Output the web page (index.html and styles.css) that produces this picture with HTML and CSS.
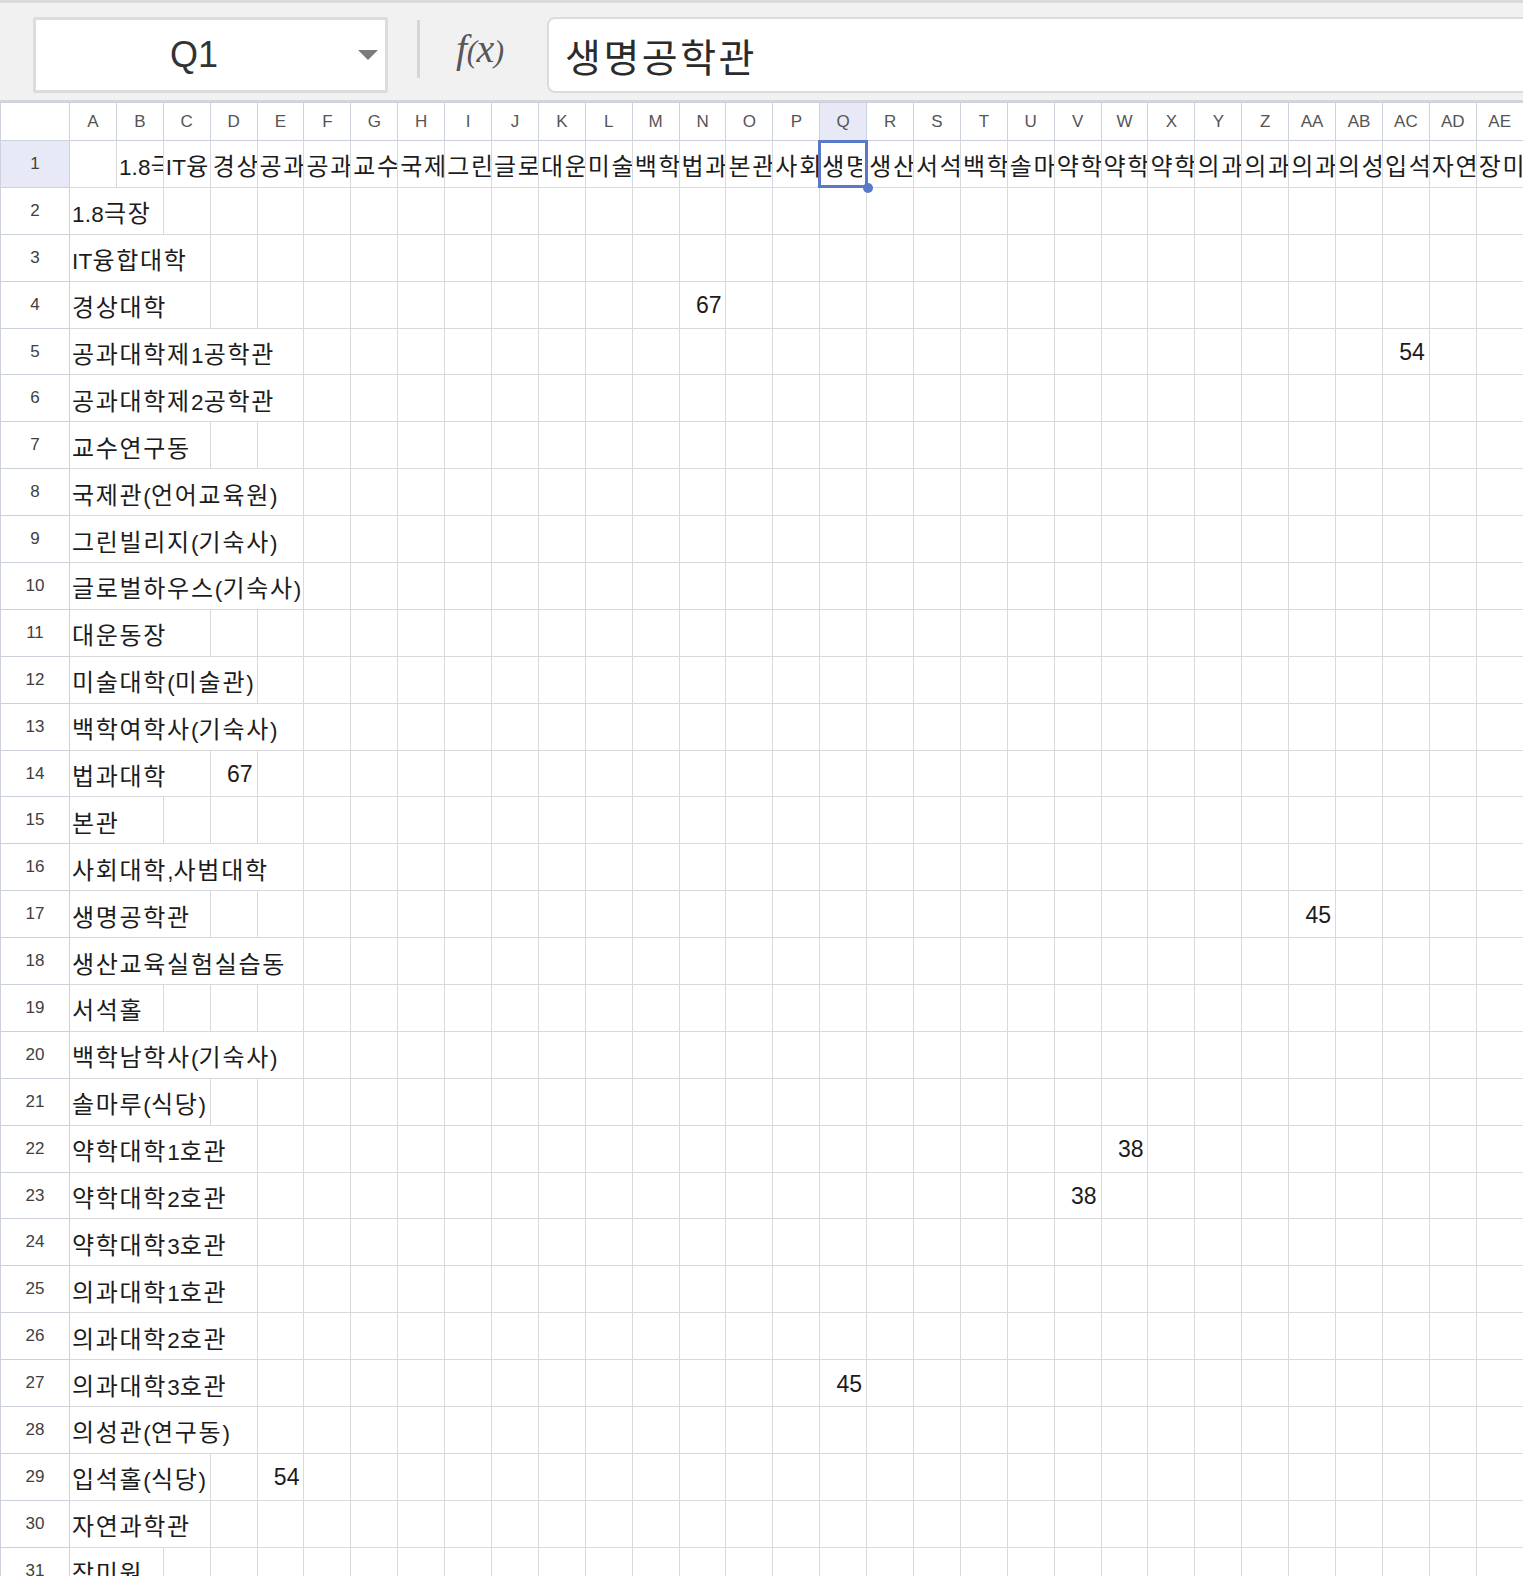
FILE: index.html
```html
<!DOCTYPE html>
<html lang="ko">
<head>
<meta charset="utf-8">
<title>Sheet</title>
<link rel="stylesheet" href="styles.css">
</head>
<body>
<div class="toolbar">
  <div class="namebox"><span class="cellref">Q1</span><span class="caret"></span></div>
  <div class="divider"></div>
  <div class="fx">f<span class="paren">(</span>x<span class="paren">)</span></div>
  <div class="formula">생명공학관</div>
</div>
<table class="sheet">
<colgroup><col class="rh"><col span="31" class="cw"></colgroup>
<thead>
<tr><th class="corner"></th><th>A</th><th>B</th><th>C</th><th>D</th><th>E</th><th>F</th><th>G</th><th>H</th><th>I</th><th>J</th><th>K</th><th>L</th><th>M</th><th>N</th><th>O</th><th>P</th><th class="hl">Q</th><th>R</th><th>S</th><th>T</th><th>U</th><th>V</th><th>W</th><th>X</th><th>Y</th><th>Z</th><th>AA</th><th>AB</th><th>AC</th><th>AD</th><th>AE</th></tr>
</thead>
<tbody>
<tr><th class="hl">1</th><td></td><td><span class="lt">1.8</span>극장</td><td><span class="lt">IT</span>융합대학</td><td>경상대학</td><td>공과대학제<span class="lt">1</span>공학관</td><td>공과대학제<span class="lt">2</span>공학관</td><td>교수연구동</td><td>국제관<span class="lt">(</span>언어교육원<span class="lt">)</span></td><td>그린빌리지<span class="lt">(</span>기숙사<span class="lt">)</span></td><td>글로벌하우스<span class="lt">(</span>기숙사<span class="lt">)</span></td><td>대운동장</td><td>미술대학<span class="lt">(</span>미술관<span class="lt">)</span></td><td>백학여학사<span class="lt">(</span>기숙사<span class="lt">)</span></td><td>법과대학</td><td>본관</td><td>사회대학<span class="lt">,</span>사범대학</td><td class="sel"><div class="clip">생명공학관</div></td><td>생산교육실험실습동</td><td>서석홀</td><td>백학남학사<span class="lt">(</span>기숙사<span class="lt">)</span></td><td>솔마루<span class="lt">(</span>식당<span class="lt">)</span></td><td>약학대학<span class="lt">1</span>호관</td><td>약학대학<span class="lt">2</span>호관</td><td>약학대학<span class="lt">3</span>호관</td><td>의과대학<span class="lt">1</span>호관</td><td>의과대학<span class="lt">2</span>호관</td><td>의과대학<span class="lt">3</span>호관</td><td>의성관<span class="lt">(</span>연구동<span class="lt">)</span></td><td>입석홀<span class="lt">(</span>식당<span class="lt">)</span></td><td>자연과학관</td><td>장미원</td></tr>
<tr><th>2</th><td colspan="2"><span class="lt">1.8</span>극장</td>
<td></td><td></td><td></td><td></td><td></td><td></td><td></td><td></td><td></td><td></td>
<td></td><td></td><td></td><td></td><td></td><td></td><td></td><td></td><td></td><td></td>
<td></td><td></td><td></td><td></td><td></td><td></td><td></td><td></td><td></td></tr>
<tr><th>3</th><td colspan="3"><span class="lt">IT</span>융합대학</td>
<td></td><td></td><td></td><td></td><td></td><td></td><td></td><td></td><td></td><td></td>
<td></td><td></td><td></td><td></td><td></td><td></td><td></td><td></td><td></td><td></td>
<td></td><td></td><td></td><td></td><td></td><td></td><td></td><td></td></tr>
<tr><th>4</th><td colspan="3">경상대학</td>
<td></td><td></td><td></td><td></td><td></td><td></td><td></td><td></td><td></td><td></td>
<td class="n">67</td>
<td></td><td></td><td></td><td></td><td></td><td></td><td></td><td></td><td></td><td></td>
<td></td><td></td><td></td><td></td><td></td><td></td><td></td></tr>
<tr><th>5</th><td colspan="5">공과대학제<span class="lt">1</span>공학관</td>
<td></td><td></td><td></td><td></td><td></td><td></td><td></td><td></td><td></td><td></td>
<td></td><td></td><td></td><td></td><td></td><td></td><td></td><td></td><td></td><td></td>
<td></td><td></td><td></td>
<td class="n">54</td>
<td></td><td></td></tr>
<tr><th>6</th><td colspan="5">공과대학제<span class="lt">2</span>공학관</td>
<td></td><td></td><td></td><td></td><td></td><td></td><td></td><td></td><td></td><td></td>
<td></td><td></td><td></td><td></td><td></td><td></td><td></td><td></td><td></td><td></td>
<td></td><td></td><td></td><td></td><td></td><td></td></tr>
<tr><th>7</th><td colspan="3">교수연구동</td>
<td></td><td></td><td></td><td></td><td></td><td></td><td></td><td></td><td></td><td></td>
<td></td><td></td><td></td><td></td><td></td><td></td><td></td><td></td><td></td><td></td>
<td></td><td></td><td></td><td></td><td></td><td></td><td></td><td></td></tr>
<tr><th>8</th><td colspan="5">국제관<span class="lt">(</span>언어교육원<span class="lt">)</span></td>
<td></td><td></td><td></td><td></td><td></td><td></td><td></td><td></td><td></td><td></td>
<td></td><td></td><td></td><td></td><td></td><td></td><td></td><td></td><td></td><td></td>
<td></td><td></td><td></td><td></td><td></td><td></td></tr>
<tr><th>9</th><td colspan="5">그린빌리지<span class="lt">(</span>기숙사<span class="lt">)</span></td>
<td></td><td></td><td></td><td></td><td></td><td></td><td></td><td></td><td></td><td></td>
<td></td><td></td><td></td><td></td><td></td><td></td><td></td><td></td><td></td><td></td>
<td></td><td></td><td></td><td></td><td></td><td></td></tr>
<tr><th>10</th><td colspan="5">글로벌하우스<span class="lt">(</span>기숙사<span class="lt">)</span></td>
<td></td><td></td><td></td><td></td><td></td><td></td><td></td><td></td><td></td><td></td>
<td></td><td></td><td></td><td></td><td></td><td></td><td></td><td></td><td></td><td></td>
<td></td><td></td><td></td><td></td><td></td><td></td></tr>
<tr><th>11</th><td colspan="3">대운동장</td>
<td></td><td></td><td></td><td></td><td></td><td></td><td></td><td></td><td></td><td></td>
<td></td><td></td><td></td><td></td><td></td><td></td><td></td><td></td><td></td><td></td>
<td></td><td></td><td></td><td></td><td></td><td></td><td></td><td></td></tr>
<tr><th>12</th><td colspan="4">미술대학<span class="lt">(</span>미술관<span class="lt">)</span></td>
<td></td><td></td><td></td><td></td><td></td><td></td><td></td><td></td><td></td><td></td>
<td></td><td></td><td></td><td></td><td></td><td></td><td></td><td></td><td></td><td></td>
<td></td><td></td><td></td><td></td><td></td><td></td><td></td></tr>
<tr><th>13</th><td colspan="5">백학여학사<span class="lt">(</span>기숙사<span class="lt">)</span></td>
<td></td><td></td><td></td><td></td><td></td><td></td><td></td><td></td><td></td><td></td>
<td></td><td></td><td></td><td></td><td></td><td></td><td></td><td></td><td></td><td></td>
<td></td><td></td><td></td><td></td><td></td><td></td></tr>
<tr><th>14</th><td colspan="3">법과대학</td>
<td class="n">67</td>
<td></td><td></td><td></td><td></td><td></td><td></td><td></td><td></td><td></td><td></td>
<td></td><td></td><td></td><td></td><td></td><td></td><td></td><td></td><td></td><td></td>
<td></td><td></td><td></td><td></td><td></td><td></td><td></td></tr>
<tr><th>15</th><td colspan="2">본관</td>
<td></td><td></td><td></td><td></td><td></td><td></td><td></td><td></td><td></td><td></td>
<td></td><td></td><td></td><td></td><td></td><td></td><td></td><td></td><td></td><td></td>
<td></td><td></td><td></td><td></td><td></td><td></td><td></td><td></td><td></td></tr>
<tr><th>16</th><td colspan="5">사회대학<span class="lt">,</span>사범대학</td>
<td></td><td></td><td></td><td></td><td></td><td></td><td></td><td></td><td></td><td></td>
<td></td><td></td><td></td><td></td><td></td><td></td><td></td><td></td><td></td><td></td>
<td></td><td></td><td></td><td></td><td></td><td></td></tr>
<tr><th>17</th><td colspan="3">생명공학관</td>
<td></td><td></td><td></td><td></td><td></td><td></td><td></td><td></td><td></td><td></td>
<td></td><td></td><td></td><td></td><td></td><td></td><td></td><td></td><td></td><td></td>
<td></td><td></td><td></td>
<td class="n">45</td>
<td></td><td></td><td></td><td></td></tr>
<tr><th>18</th><td colspan="5">생산교육실험실습동</td>
<td></td><td></td><td></td><td></td><td></td><td></td><td></td><td></td><td></td><td></td>
<td></td><td></td><td></td><td></td><td></td><td></td><td></td><td></td><td></td><td></td>
<td></td><td></td><td></td><td></td><td></td><td></td></tr>
<tr><th>19</th><td colspan="2">서석홀</td>
<td></td><td></td><td></td><td></td><td></td><td></td><td></td><td></td><td></td><td></td>
<td></td><td></td><td></td><td></td><td></td><td></td><td></td><td></td><td></td><td></td>
<td></td><td></td><td></td><td></td><td></td><td></td><td></td><td></td><td></td></tr>
<tr><th>20</th><td colspan="5">백학남학사<span class="lt">(</span>기숙사<span class="lt">)</span></td>
<td></td><td></td><td></td><td></td><td></td><td></td><td></td><td></td><td></td><td></td>
<td></td><td></td><td></td><td></td><td></td><td></td><td></td><td></td><td></td><td></td>
<td></td><td></td><td></td><td></td><td></td><td></td></tr>
<tr><th>21</th><td colspan="3">솔마루<span class="lt">(</span>식당<span class="lt">)</span></td>
<td></td><td></td><td></td><td></td><td></td><td></td><td></td><td></td><td></td><td></td>
<td></td><td></td><td></td><td></td><td></td><td></td><td></td><td></td><td></td><td></td>
<td></td><td></td><td></td><td></td><td></td><td></td><td></td><td></td></tr>
<tr><th>22</th><td colspan="4">약학대학<span class="lt">1</span>호관</td>
<td></td><td></td><td></td><td></td><td></td><td></td><td></td><td></td><td></td><td></td>
<td></td><td></td><td></td><td></td><td></td><td></td><td></td><td></td>
<td class="n">38</td>
<td></td><td></td><td></td><td></td><td></td><td></td><td></td><td></td></tr>
<tr><th>23</th><td colspan="4">약학대학<span class="lt">2</span>호관</td>
<td></td><td></td><td></td><td></td><td></td><td></td><td></td><td></td><td></td><td></td>
<td></td><td></td><td></td><td></td><td></td><td></td><td></td>
<td class="n">38</td>
<td></td><td></td><td></td><td></td><td></td><td></td><td></td><td></td><td></td></tr>
<tr><th>24</th><td colspan="4">약학대학<span class="lt">3</span>호관</td>
<td></td><td></td><td></td><td></td><td></td><td></td><td></td><td></td><td></td><td></td>
<td></td><td></td><td></td><td></td><td></td><td></td><td></td><td></td><td></td><td></td>
<td></td><td></td><td></td><td></td><td></td><td></td><td></td></tr>
<tr><th>25</th><td colspan="4">의과대학<span class="lt">1</span>호관</td>
<td></td><td></td><td></td><td></td><td></td><td></td><td></td><td></td><td></td><td></td>
<td></td><td></td><td></td><td></td><td></td><td></td><td></td><td></td><td></td><td></td>
<td></td><td></td><td></td><td></td><td></td><td></td><td></td></tr>
<tr><th>26</th><td colspan="4">의과대학<span class="lt">2</span>호관</td>
<td></td><td></td><td></td><td></td><td></td><td></td><td></td><td></td><td></td><td></td>
<td></td><td></td><td></td><td></td><td></td><td></td><td></td><td></td><td></td><td></td>
<td></td><td></td><td></td><td></td><td></td><td></td><td></td></tr>
<tr><th>27</th><td colspan="4">의과대학<span class="lt">3</span>호관</td>
<td></td><td></td><td></td><td></td><td></td><td></td><td></td><td></td><td></td><td></td>
<td></td><td></td>
<td class="n">45</td>
<td></td><td></td><td></td><td></td><td></td><td></td><td></td><td></td><td></td><td></td>
<td></td><td></td><td></td><td></td></tr>
<tr><th>28</th><td colspan="4">의성관<span class="lt">(</span>연구동<span class="lt">)</span></td>
<td></td><td></td><td></td><td></td><td></td><td></td><td></td><td></td><td></td><td></td>
<td></td><td></td><td></td><td></td><td></td><td></td><td></td><td></td><td></td><td></td>
<td></td><td></td><td></td><td></td><td></td><td></td><td></td></tr>
<tr><th>29</th><td colspan="3">입석홀<span class="lt">(</span>식당<span class="lt">)</span></td>
<td></td>
<td class="n">54</td>
<td></td><td></td><td></td><td></td><td></td><td></td><td></td><td></td><td></td><td></td>
<td></td><td></td><td></td><td></td><td></td><td></td><td></td><td></td><td></td><td></td>
<td></td><td></td><td></td><td></td><td></td><td></td></tr>
<tr><th>30</th><td colspan="3">자연과학관</td>
<td></td><td></td><td></td><td></td><td></td><td></td><td></td><td></td><td></td><td></td>
<td></td><td></td><td></td><td></td><td></td><td></td><td></td><td></td><td></td><td></td>
<td></td><td></td><td></td><td></td><td></td><td></td><td></td><td></td></tr>
<tr><th>31</th><td colspan="2">장미원</td>
<td></td><td></td><td></td><td></td><td></td><td></td><td></td><td></td><td></td><td></td>
<td></td><td></td><td></td><td></td><td></td><td></td><td></td><td></td><td></td><td></td>
<td></td><td></td><td></td><td></td><td></td><td></td><td></td><td></td><td></td></tr>
</tbody>
</table>
</body>
</html>
```
FILE: styles.css
```css
html, body {
  margin: 0;
  padding: 0;
  background: #ffffff;
  overflow: hidden;
}
body {
  width: 1523px;
  height: 1576px;
  font-family: "Liberation Sans", "Noto Sans CJK KR", sans-serif;
  color: #1f1f1f;
}

/* ---------- toolbar ---------- */
.toolbar {
  display: flex;
  align-items: flex-start;
  height: 97px;
  background: #f1f1f1;
  border-top: 3px solid #dadada;
  border-bottom: 2px solid #d2d5de;
  padding-left: 33px;
  overflow: hidden;
}
.namebox {
  margin-top: 14px;
  width: 355px;
  height: 76px;
  box-sizing: border-box;
  border: 3px solid #dcdcdc;
  border-radius: 2px;
  background: #ffffff;
  display: flex;
  align-items: center;
}
.cellref {
  flex: 1;
  text-align: center;
  font-size: 36px;
  color: #333333;
  margin-left: 4px;
}
.caret {
  width: 0;
  height: 0;
  border-left: 10px solid transparent;
  border-right: 10px solid transparent;
  border-top: 10px solid #7b7b7b;
  margin: 0 7px 0 10px;
}
.divider {
  width: 3px;
  height: 58px;
  margin: 17px 0 0 29px;
  background: #d6d6d6;
}
.fx {
  width: 56px;
  margin: 26px 0 0 36px;
  font-family: "Liberation Serif", "DejaVu Serif", serif;
  font-style: italic;
  font-size: 40px;
  line-height: 40px;
  color: #575757;
  letter-spacing: -0.5px;
}
.fx .paren {
  font-size: 31px;
}
.formula {
  flex: 1;
  margin: 14px -14px 0 35px;
  height: 76px;
  box-sizing: border-box;
  border: 2px solid #dcdcdc;
  border-radius: 8px;
  background: #ffffff;
  padding-left: 16px;
  display: flex;
  align-items: center;
  font-size: 39px;
  letter-spacing: 2.5px;
  color: #2b2b2b;
}

/* ---------- sheet ---------- */
.sheet {
  border-collapse: collapse;
  table-layout: fixed;
  width: 1523px;
}
.sheet col.rh { width: 69px; }
.sheet col.cw { width: 46.9px; }

.sheet thead tr { height: 38px; }
.sheet tbody tr { height: 46.9px; }

.sheet th {
  padding: 0;
  font-weight: normal;
  font-size: 17px;
  color: #555555;
  background: #ffffff;
  border: 1px solid #cdd1dc;
  text-align: center;
  vertical-align: middle;
}
.sheet tbody th {
  color: #404040;
}
.sheet th.hl {
  background: #e7eaf6;
}

.sheet td {
  padding: 2px 4px 0 2px;
  border: 1px solid #d8d9dd;
  font-size: 24px;
  letter-spacing: 1.7px;
  white-space: nowrap;
  overflow: hidden;
  text-align: left;
  vertical-align: middle;
  color: #1c1c1c;
}
.sheet td .lt {
  font-size: 22.5px;
  letter-spacing: 0.2px;
}
.sheet td.n {
  text-align: right;
  font-size: 23px;
  letter-spacing: 0;
}
.sheet td.sel {
  position: relative;
  overflow: visible;
}
.sheet td.sel .clip {
  overflow: hidden;
  white-space: nowrap;
}
.sheet td.sel::after {
  content: "";
  position: absolute;
  left: -2px;
  top: -1px;
  right: -2px;
  bottom: -1px;
  border: 3px solid #5a78c8;
  z-index: 2;
  pointer-events: none;
}
.sheet td.sel::before {
  content: "";
  position: absolute;
  right: -7px;
  bottom: -6px;
  width: 10px;
  height: 10px;
  border-radius: 50%;
  background: #5a78c8;
  z-index: 3;
}
```
